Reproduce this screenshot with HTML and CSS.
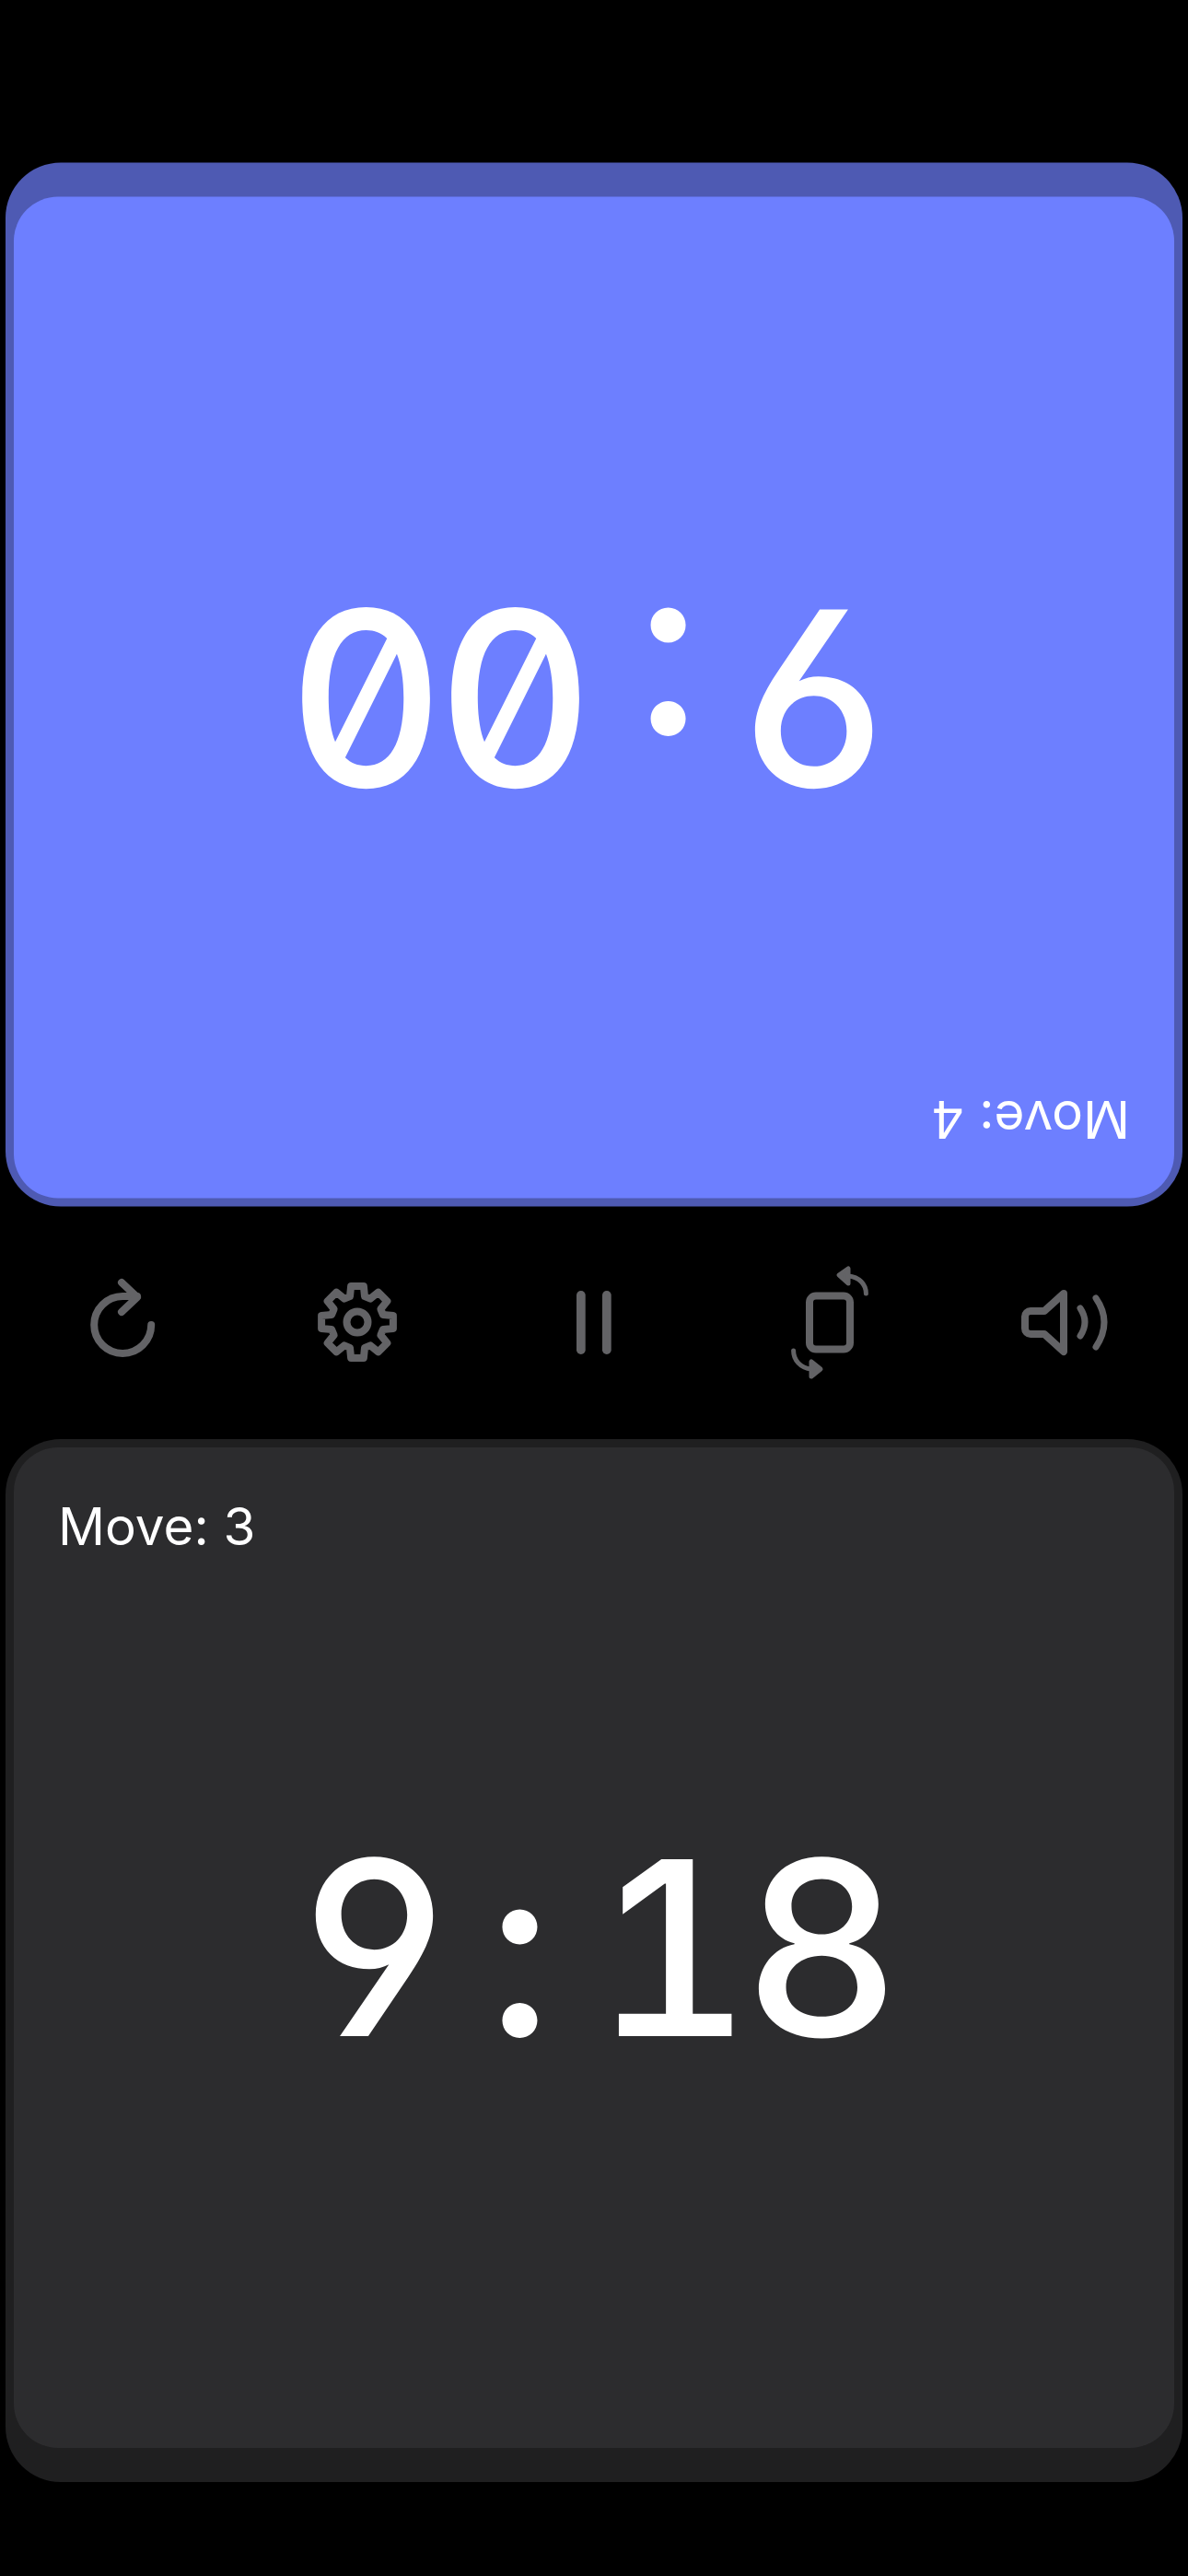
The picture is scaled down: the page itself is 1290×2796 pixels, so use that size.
FILE: index.html
```html
<!DOCTYPE html>
<html lang="en">
<head>
    <meta charset="UTF-8">
    <meta name="viewport" content="width=device-width, initial-scale=1.0">
    <title>Chess Clock</title>
    <link rel="stylesheet" href="styles.css">
</head>
<body>
    <div class="clock clock-top">
        <div class="face">
            <div class="moves">Move: 4</div>
            <div class="time">
                <span>9</span><span>:</span><span>0</span><span>0</span>
            </div>
        </div>
    </div>

    <div class="controls">
        <svg class="icon" viewBox="-64 -64 128 128">
            <path d="M30.2 2A31 31 0 1 1-.8-29H15"/>
            <path d="M-2-44 15-28-2-12"/>
        </svg>
        <svg class="icon" viewBox="-64 -64 128 128">
            <g transform="translate(-1 -1)">
                <path d="M-6.9-38.9H6.9L8-27.9 14.1-25.4 22.7-32.4 32.4-22.7 25.4-14.1 27.9-8 38.9-6.9V6.9L27.9 8 25.4 14.1 32.4 22.7 22.7 32.4 14.1 25.4 8 27.9 6.9 38.9H-6.9L-8 27.9-14.1 25.4-22.7 32.4-32.4 22.7-25.4 14.1-27.9 8-38.9 6.9V-6.9L-27.9-8-25.4-14.1-32.4-22.7-22.7-32.4-14.1-25.4-8-27.9Z"/>
                <circle r="11.5"/>
            </g>
        </svg>
        <svg class="icon" viewBox="-64 -64 128 128">
            <rect class="solid" x="-19" y="-35" width="9.7" height="69" rx="4.8"/>
            <rect class="solid" x="9" y="-35" width="9.7" height="69" rx="4.8"/>
        </svg>
        <svg class="icon" viewBox="-64 -64 128 128">
            <rect x="-22" y="-29.5" width="44" height="58" rx="7"/>
            <path class="thin" d="M39.4-32C39.4-42 32-50 20-51"/>
            <path class="thin solid" d="M10-52 20-59V-43Z"/>
            <path class="thin" d="M-39.4 30C-39.4 40-32 49-20 50"/>
            <path class="thin solid" d="M-10 50-20 42V58Z"/>
        </svg>
        <svg class="icon" viewBox="-64 -64 128 128">
            <path d="M-1-32-22-13H-37A6 6 0 0 0-43-7V6A6 6 0 0 0-37 12H-22L-1 31Z"/>
            <path class="wave" d="M17-16Q27-1 17 14"/>
            <path class="wave" d="M34-27Q52-1 34 26"/>
        </svg>
    </div>

    <div class="clock clock-bottom">
        <div class="face">
            <div class="moves">Move: 3</div>
            <div class="time">
                <span>9</span><span>:</span><span>1</span><span>8</span>
            </div>
        </div>
    </div>
</body>
</html>
```

FILE: styles.css
```css
* {
    box-sizing: border-box;
}
body {
    margin: 0;
    height: 2796px;
    padding: 177px 6px 102px;
    display: flex;
    flex-direction: column;
    background: #000000;
    font-family: Inter, "Noto Sans", sans-serif;
    color: #ffffff;
}
.clock {
    flex: 1;
    padding: 9px 9px 37px;
    border-radius: 60px;
    display: flex;
}
.clock-top {
    background: #4e5ab3;
    transform: rotate(180deg);
}
.clock-bottom {
    background: #1f1f20;
}
.face {
    flex: 1;
    position: relative;
    border-radius: 48px;
    display: flex;
    align-items: center;
    justify-content: center;
}
.clock-top .face {
    background: #6d7fff;
}
.clock-bottom .face {
    background: #2c2c2e;
}
.moves {
    position: absolute;
    left: 48px;
    top: 51px;
    font-size: 56.5px;
    line-height: 70px;
}
.time {
    display: flex;
    font-size: 264px;
    font-weight: 500;
    line-height: 1;
    font-feature-settings: "tnum", "zero", "cv03", "cv04";
}
.time span {
    width: 162px;
    text-align: center;
}
.controls {
    height: 252px;
    display: flex;
    flex: none;
    align-items: center;
    justify-content: space-around;
}
.icon {
    width: 128px;
    height: 128px;
    fill: none;
    stroke: #636366;
    stroke-width: 8;
    stroke-linecap: round;
    stroke-linejoin: round;
}
.icon .solid {
    fill: #636366;
    stroke: none;
}
.icon .thin {
    stroke-width: 5;
}
.icon .thin.solid {
    stroke: #636366;
}
.icon .wave {
    stroke-width: 7;
}
```
